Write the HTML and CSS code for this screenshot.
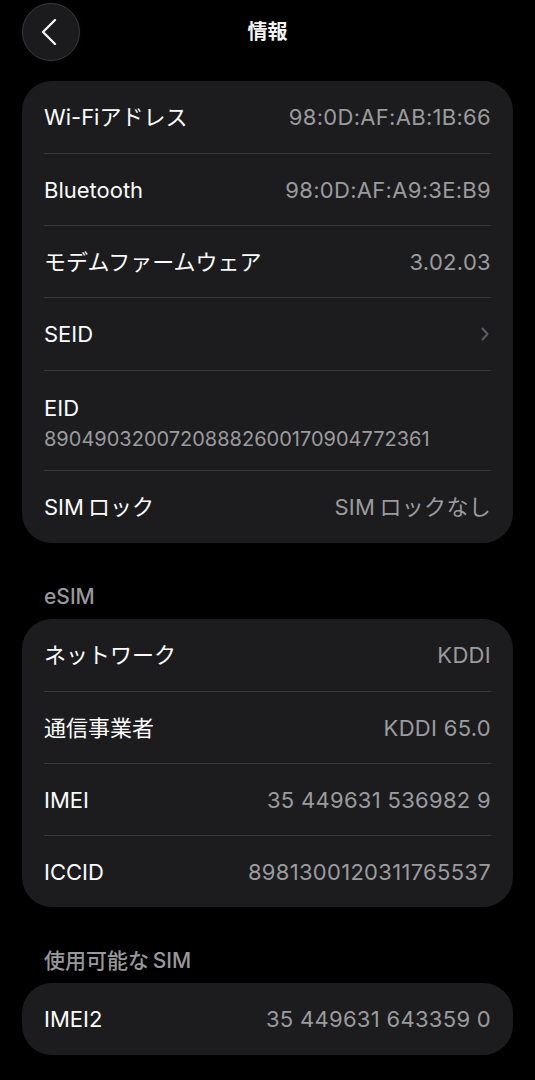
FILE: index.html
```html
<!DOCTYPE html>
<html lang="ja">
<head>
<meta charset="utf-8">
<title>情報</title>
<link rel="stylesheet" href="styles.css">
</head>
<body>
<div class="page">
  <header class="topbar">
    <button class="back" aria-label="戻る">
      <svg width="56" height="56" viewBox="0 0 56 56"><path d="M32 16 L20 28 L32 40" fill="none" stroke="#f2f2f2" stroke-width="2.4" stroke-linecap="round" stroke-linejoin="round"/></svg>
    </button>
    <h1 class="title">情報</h1>
    <span class="spacer"></span>
  </header>

  <section class="card first">
    <div class="row"><span class="label">Wi-Fiアドレス</span><span class="value">98:0D:AF:AB:1B:66</span></div>
    <div class="row"><span class="label">Bluetooth</span><span class="value">98:0D:AF:A9:3E:B9</span></div>
    <div class="row"><span class="label">モデムファームウェア</span><span class="value">3.02.03</span></div>
    <div class="row tall"><span class="label">SEID</span>
      <svg class="chev" width="10" height="16" viewBox="0 0 10 16"><path d="M2.5 2.5 L7.5 8 L2.5 13.5" fill="none" stroke="#5c5c60" stroke-width="2" stroke-linecap="round" stroke-linejoin="round"/></svg>
    </div>
    <div class="row stacked"><span class="label">EID</span><span class="value sub">89049032007208882600170904772361</span></div>
    <div class="row tall"><span class="label">SIM&#8201;ロック</span><span class="value">SIM&#8201;ロックなし</span></div>
  </section>

  <h2 class="section-title">eSIM</h2>
  <section class="card">
    <div class="row"><span class="label">ネットワーク</span><span class="value">KDDI</span></div>
    <div class="row"><span class="label">通信事業者</span><span class="value">KDDI 65.0</span></div>
    <div class="row"><span class="label">IMEI</span><span class="value">35 449631 536982 9</span></div>
    <div class="row"><span class="label">ICCID</span><span class="value">8981300120311765537</span></div>
  </section>

  <h2 class="section-title">使用可能な&#8201;SIM</h2>
  <section class="card">
    <div class="row"><span class="label">IMEI2</span><span class="value">35 449631 643359 0</span></div>
  </section>
</div>
</body>
</html>
```

FILE: styles.css
```css
html, body {
  margin: 0;
  padding: 0;
  background: #000;
}
body {
  font-family: Inter, "Noto Sans CJK JP", sans-serif;
  color: #fff;
  -webkit-font-smoothing: antialiased;
}
.page {
  padding: 3px 22px 0;
}
.topbar {
  display: grid;
  grid-template-columns: 58px 1fr 58px;
  align-items: center;
  height: 58px;
}
.back {
  width: 58px;
  height: 58px;
  border-radius: 50%;
  background: #1b1b1d;
  border: 1px solid #38383b;
  padding: 0;
  display: flex;
  align-items: center;
  justify-content: center;
  box-shadow: 0 0 6px rgba(255,255,255,0.04);
}
.title {
  margin: 0;
  text-align: center;
  font-size: 20px;
  font-weight: 700;
  line-height: 24px;
  color: #f4f4f4;
}
.card {
  background: #1c1c1e;
  border-radius: 30px;
  padding: 0 22px;
}
.card.first {
  margin-top: 20px;
}
.row {
  display: flex;
  align-items: center;
  justify-content: space-between;
  height: 72px;
  box-sizing: border-box;
  border-top: 1px solid #38383a;
}
.row:first-child {
  border-top: none;
}
.row.tall {
  height: 73px;
}
.label {
  font-size: 22px;
  line-height: 26px;
  color: #fbfbfb;
}
.value {
  font-size: 22px;
  line-height: 26px;
  color: #9b9b9f;
  letter-spacing: 0.3px;
}
.chev {
  margin-right: 1px;
}
.row.stacked {
  height: 100px;
  flex-direction: column;
  align-items: flex-start;
  justify-content: flex-start;
  padding: 24px 0 20px;
}
.value.sub {
  font-size: 20px;
  line-height: 24px;
  margin-top: 6px;
  letter-spacing: 0;
}
.section-title {
  margin: 42px 22px 10px;
  font-size: 21px;
  line-height: 24px;
  font-weight: 500;
  color: #98989c;
}
```
